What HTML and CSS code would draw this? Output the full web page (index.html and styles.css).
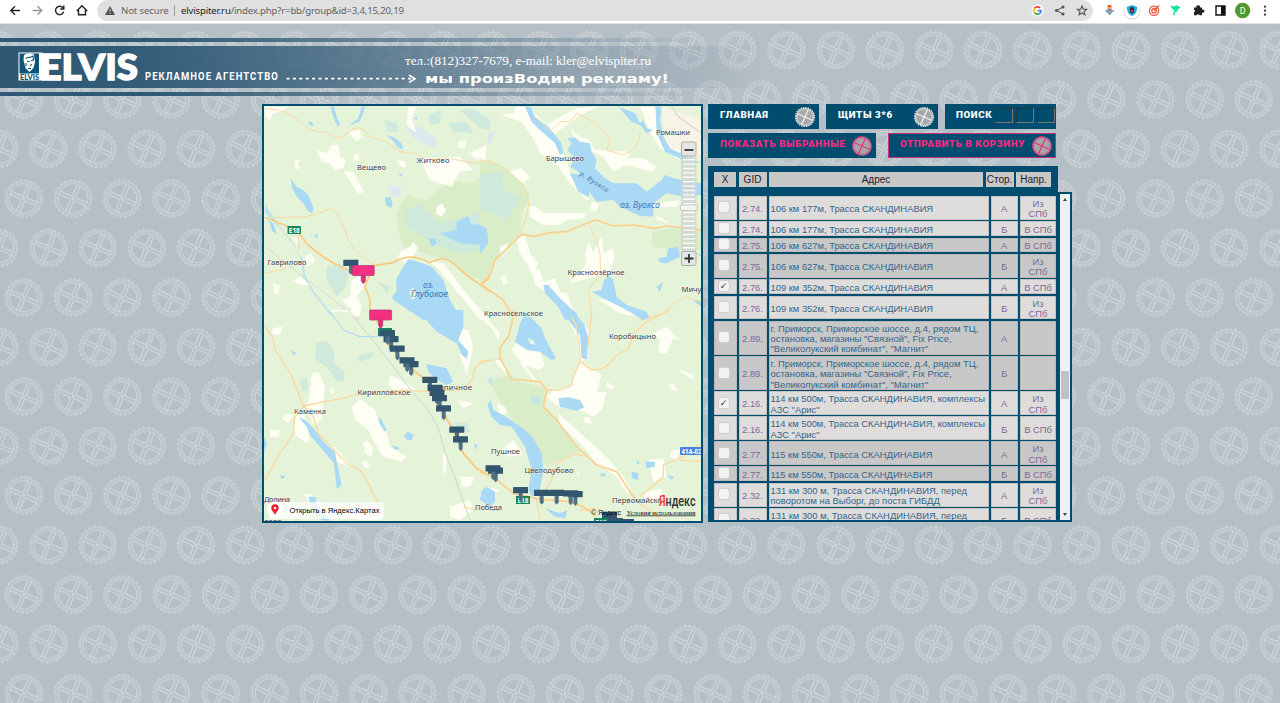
FILE: index.html
```html
<!DOCTYPE html>
<html lang="ru">
<head>
<meta charset="utf-8">
<title>ELVIS</title>
<link rel="stylesheet" href="styles.css">
</head>
<body>
<svg class="wallpaper" width="1280" height="679" viewBox="0 24 1280 679">
  <defs>
    <g id="gear" fill="none">
      <circle r="18.7" stroke-width="1" stroke-dasharray="2.7 2.195"/>
      <circle r="17.1" stroke-width="1" stroke-opacity=".75"/>
      <circle r="14.6" stroke-width="1" stroke-opacity=".9"/>
      <g transform="rotate(23)" stroke-width="1.1">
        <path d="M-14.600-1.700H-2.800L-1.700-2.800V-14.600M1.700-14.600V-2.800L2.800-1.700H14.600M14.600 1.700H2.800L1.700 2.800V14.600M-1.700 14.600V2.800L-2.800 1.700H-14.600"/>
        <circle r="1"/>
      </g>
    </g>
    <g id="wheel">
      <circle r="9.3" fill="#a6a9aa"/>
      <circle r="9.5" fill="none" stroke="currentColor" stroke-width="1.2" stroke-dasharray="1.400 1.087"/>
      <circle r="8.2" fill="none" stroke="currentColor" stroke-width=".7"/>
      <path d="M-8 0H8M0-8V8" transform="rotate(24)" stroke="currentColor" stroke-width="1.300"/>
    </g>
    <pattern id="gears" patternUnits="userSpaceOnUse" x="-.8" y="25.3" width="49.2" height="99">
      <g stroke="#d4dade">
        <use href="#gear" x="0" y="24.7"/><use href="#gear" x="49.2" y="24.7"/>
        <use href="#gear" x="24.6" y="74.2"/>
      </g>
    </pattern>
  </defs>
  <rect y="24" width="1280" height="679" fill="#b5bfc6"/>
  <rect y="24" width="1280" height="679" fill="url(#gears)"/>
</svg>

<div class="browser">
  <svg class="nav" width="97" height="22" viewBox="0 0 97 22" fill="none" stroke="#222" stroke-width="1.4">
    <path d="M20 10.5H11M15 6.3L10.8 10.5L15 14.7"/>
    <path d="M32.5 10.5H41.5M37.5 6.3L41.7 10.5L37.5 14.7" stroke="#999"/>
    <path d="M63 7.8A4.2 4.2 0 1 0 63.7 11.8M63.8 5.5V9H60.2"/>
    <path d="M76.8 11L82 5.700L87.2 11M78.5 10V14.8H85.5V10"/>
  </svg>
  <div class="omnibox">
    <svg width="10" height="9" viewBox="0 0 10 9"><path d="M5 0L10 9H0Z" fill="#505357"/><path d="M5 3.2V5.6M5 6.6V7.7" stroke="#e0e0e0"/></svg>
    <span class="insecure">Not secure</span>
    <span class="url"><b>elvispiter.ru</b>/index.php?r=bb/group&amp;id=3,4,15,20,19</span>
    <svg class="omniicons" width="64" height="21" viewBox="1029 0 64 21" fill="none">
      <circle cx="1037.5" cy="10.5" r="6" fill="#fff"/>
      <g stroke-width="1.7"><path d="M1040.2 8A3.6 3.6 0 0 0 1034.6 8.3" stroke="#ea4335"/><path d="M1034.6 8.3A3.7 3.7 0 0 0 1034.6 12.7" stroke="#fbbc05"/><path d="M1034.6 12.7A3.6 3.6 0 0 0 1039.9 13.3" stroke="#34a853"/><path d="M1037.5 10.6H1041.2A3.7 3.7 0 0 1 1039.9 13.3" stroke="#4285f4"/></g>
      <path d="M1063 7L1056.5 10.5L1063 14" stroke="#555"/><g fill="#555"><circle cx="1063" cy="7" r="1.6"/><circle cx="1056.5" cy="10.5" r="1.6"/><circle cx="1063" cy="14" r="1.6"/></g>
      <path d="M1082 5.9L1083.3 9.1L1086.7 9.3L1084.1 11.5L1084.9 14.8L1082 13L1079.1 14.8L1079.9 11.5L1077.3 9.3L1080.7 9.1Z" stroke="#555" stroke-width="1.1"/>
    </svg>
  </div>
  <svg width="187" height="24" viewBox="1093 0 187 24">
    <rect x="1107.5" y="5" width="4" height="2" fill="#f05545"/><rect x="1107.5" y="7" width="4" height="2" fill="#f7a33c"/><rect x="1107.5" y="9" width="4" height="2" fill="#8f69b4"/><path d="M1104.5 10H1114.5L1109.5 15.5Z" fill="#7fa3b4"/>
    <circle cx="1132" cy="11" r="8.6" fill="#d3d5d6"/><circle cx="1132" cy="10.5" r="8" fill="#fff"/><path d="M1126.800 7L1132 5L1137.200 7Q1137.200 13.5 1132 16Q1126.800 13.5 1126.800 7Z" fill="#29a5dd"/><rect x="1130" y="7" width="4" height="6.5" rx="2" fill="#232939"/><circle cx="1132" cy="11" r="1.2" fill="#e64c3c"/>
    <g fill="none" stroke="#ec5540"><circle cx="1154" cy="10.7" r="4.6" stroke-width="1.3"/><circle cx="1154" cy="10.7" r="2.2" stroke-width="1.3"/><path d="M1154 10.7L1159 5.5" stroke-width="1.6"/></g>
    <path d="M1171 5.5L1174 6.6L1176.5 5.3L1180.5 7L1178.8 9L1177.6 9L1178 11L1175.3 12L1174.4 15.5L1173 15.2L1174 10L1171.2 8Z" fill="#1de49a"/>
    <path d="M1194 7.4H1196.4A1.8 1.8 0 1 1 1199.9 7.4H1202V9.6A1.7 1.7 0 1 1 1202 12.7V15.300H1199.6A1.6 1.6 0 0 0 1196.6 15.300H1194V12.5A1.6 1.6 0 0 0 1194 9.6Z" fill="#222"/>
    <path d="M1216 6H1225V15H1216Z" fill="none" stroke="#111" stroke-width="1.4"/><rect x="1221" y="6" width="4" height="9" fill="#111"/>
    <circle cx="1242.6" cy="10.5" r="7.7" fill="#54992e"/><text class="avatar" x="1242.6" y="13.7" text-anchor="middle">D</text>
    <g fill="#333"><circle cx="1265" cy="6.7" r="1.1"/><circle cx="1265" cy="10.7" r="1.1"/><circle cx="1265" cy="14.7" r="1.1"/></g>
  </svg>
</div>

<header class="banner">
  <div class="stripe"></div>
  <div class="band">
    <svg class="brand" width="820" height="42" viewBox="0 46 820 42">
      <rect x="18.5" y="52.500" width="24" height="28" fill="#fff"/>
      <rect x="19.5" y="53.5" width="19.500" height="20" fill="#0c5576"/>
      <path d="M24 55Q29 52 34 54.500L35 62L33.500 68L29.500 72L25.500 68L23.500 60Z" fill="#fff"/>
      <path d="M26 59Q27 56.500 30 57.500L33 56L33.500 60L31 61M27 61.500H29.500M31.500 64L30.500 66M28 68.500H31M26 63V66" fill="none" stroke="#0c5576" stroke-width="1.100"/>
      <text class="logo-mini" x="20" y="79.700" textLength="19" lengthAdjust="spacingAndGlyphs">ELVIS</text>
      <text class="logo-main" x="39.500" y="79.800" textLength="98.500" lengthAdjust="spacingAndGlyphs">ELVIS</text>
      <text class="agency" transform="translate(145 80) scale(.8 1)" textLength="166">РЕКЛАМНОЕ АГЕНТСТВО</text>
      <path d="M286.500 78.700H411" stroke="#fff" stroke-width="1.700" stroke-dasharray="3 3.400"/>
      <path d="M409 75L415 78.700L409 82.400" fill="none" stroke="#fff" stroke-width="1.700"/>
      <text class="contact" x="405" y="64.500" textLength="246" lengthAdjust="spacingAndGlyphs">тел.:(812)327-7679, e-mail: kler@elvispiter.ru</text>
      <text class="slogan" x="425" y="82.500" textLength="244" lengthAdjust="spacingAndGlyphs">мы произВодим рекламу!</text>
    </svg>
  </div>
  <div class="stripe"></div>
</header>

<main class="content">
  <section class="map">
    <svg width="437" height="415" viewBox="264 106 437 415">
      <defs>
        <g id="sign"><path d="M5.700 5H9.700V12.500L7.700 15L5.700 12.500Z" fill="#527084"/><rect width="15" height="6.200" rx=".5" fill="#31566e"/></g>
        <g id="picked"><path d="M9 9H13.200V15.500L11.100 18.500L9 15.500Z" fill="#e52a78" stroke="#8c3b6b" stroke-width=".6"/><rect width="22" height="10" rx="1" fill="#f72f82" stroke="#a33b73" stroke-width=".7"/></g>
      </defs>
      <rect x="264" y="106" width="438" height="415" fill="#e5f3d8"/>
      <g transform="translate(260 100) scale(.33333)">
        <path d="M410 340L440 285L500 300L570 240L640 250L690 200V545L640 530L560 480L430 440L412 380Z" fill="#d9eec8"/>
        <path d="M435 330L480 315L540 370L690 330V440L610 460L540 440L440 380ZM372 60L410 70L415 95L385 95ZM505 45L545 30L540 70L510 75ZM565 70L620 65L640 100L580 95ZM600 30L640 25L690 60V90L660 85ZM665 220L690 215V350L665 330ZM200 500L240 490L270 510L255 560L230 590L200 540ZM355 545L390 560L380 580Z" fill="#cfe9dc"/>
        <path d="M435 80L480 80L530 120L525 145L470 120ZM385 255L425 265L420 290L395 290ZM500 195L525 220L515 230ZM612 205H640L625 220Z" fill="#dbe8ef"/>
        <g fill="#fffef5">
          <path d="M15 20H85L65 35L40 40L30 60L15 50ZM170 150L200 160L215 135L235 135L240 170L258 180L250 205L225 210L210 190L185 185ZM252 215L280 215L295 245L312 275L295 283ZM280 165L297 160V180L283 183ZM105 180L122 178L113 192L122 205L105 207ZM265 95L300 90L306 110L290 125ZM445 20H468L455 60L470 100L440 75ZM595 125L620 120L615 145L595 145ZM630 160L680 135L675 180L645 175ZM480 175L600 170L640 210L600 215L575 260L540 250L510 240ZM415 180L438 185L435 205L415 195ZM530 320L545 310L558 330L545 350L527 340ZM420 455L450 440L460 425L475 445L440 490L415 475ZM95 545L120 530L155 555L125 555ZM135 470L155 460L165 485L140 500ZM40 550L60 555L55 585L40 575ZM275 540L310 525L318 550L290 590L305 615L300 640L270 625L245 600L270 590ZM95 410L115 418L110 432Z"/>
          <path d="M495 480L530 500L660 660H690L610 570L550 490Z"/>
        </g>
        <g fill="#a9d9f5">
          <path d="M212 20H222L230 50L240 75L232 78L218 45ZM305 20H315L310 40L298 65L268 75L295 55ZM378 105L402 112L425 130L430 150L412 140L398 120ZM145 63L155 66L162 78L150 77ZM92 235L110 260L130 270L148 290L160 325L158 340L145 335L130 310L110 290L95 260ZM375 292L392 292L398 312L392 325L378 315ZM415 222H428L425 230ZM460 55L472 50V60ZM162 408L172 400V418ZM25 360L40 370L50 402L38 395ZM505 415L525 415L530 432L515 440ZM540 400L590 390L590 365L625 348L635 375L690 370V400L670 405L665 435L600 430L570 415Z"/>
          <path d="M445 478Q475 485 515 500L550 540L570 600L605 660H490L460 640L400 600Q390 590 410 575L408 540L430 500ZM448 575L460 560L470 590L455 600Z" fill-rule="evenodd"/>
          <path d="M15 310V340L60 385L100 435L120 470L130 530L160 580L205 640L230 660L205 630L160 570L138 530L128 480L100 430L60 380Z" opacity=".6"/>
        </g>
        <g fill="none" stroke="#fbd9a0" stroke-width="4" stroke-linejoin="round">
          <path d="M15 25Q90 30 120 65T200 97Q230 130 265 97T330 110L380 125L420 155L465 160L500 180L560 173L640 190L690 183M40 352H130Q180 340 200 330T235 345T258 400T300 465L340 493M115 405L118 450M15 520L80 505" stroke-width="3"/>
          <path d="M15 352L110 390L140 430Q180 470 250 505L320 530M340 497L400 488Q450 455 510 488Q550 465 580 490L620 525L690 575M340 495L315 560L330 600V640M690 530L665 553" stroke="#fbca7e" stroke-width="5"/>
        </g>
        <path d="M15 440L130 530L300 660" fill="none" stroke="#cbd2cd" stroke-width="2"/>
      </g>
      <g transform="translate(480 100) scale(.33333)">
        <path d="M0 180Q60 185 120 235L150 290L125 340L120 410L60 455L20 530L0 550ZM515 395L600 380L662 390V450L590 450L515 440Z" fill="#d9eec8"/>
        <path d="M0 225L60 215L75 270L125 295L80 360L0 325ZM455 185L490 190L470 200Z" fill="#cfe9dc"/>
        <path d="M25 100L45 95L30 135L22 128Z" fill="#dbe8ef"/>
        <g fill="#fffef5">
          <path d="M60 45L100 40L110 20H145L200 75L240 50L290 25L350 20L300 45L220 105L240 145L260 180L275 235L330 300L320 300L265 245L230 190L215 145L155 110L125 65ZM150 95L260 180L240 200L180 160ZM270 85L300 110L330 120L345 150L450 155L440 175L490 175L530 200L515 215L440 195L400 215L370 170L290 130ZM85 215L125 205L150 230L130 250ZM145 320L165 318L190 340L320 340L310 355L260 360L240 375L190 375L150 350ZM110 415L135 405L150 460L175 490L160 520L120 460ZM60 440L85 430L75 450L60 460ZM60 530L75 525L85 550L70 555ZM145 505L180 510L190 545L225 535L240 575L260 580L290 650L265 645L190 570L165 555L160 530ZM315 460L325 425L340 455L365 410L370 460L400 445L402 480L385 520L270 550L320 490ZM350 595L420 610L470 650L420 640ZM505 315L600 300L590 320L500 325ZM530 345L570 370L530 360ZM335 305L355 310L350 335L330 330ZM480 20H525L530 80L540 120L600 150L600 180L540 145L510 95Z"/>
          <path d="M545 20L665 60V170L560 140L550 90Z" fill="#f7f3e6"/>
        </g>
        <path d="M575 20L595 50L665 100" fill="none" stroke="#d9d9d9" stroke-width="4"/>
        <g fill="#a9d9f5">
          <path d="M135 20H152L165 50L205 80L245 130L250 160L240 165L225 130L180 90L155 65Z"/>
          <path d="M262 115L285 112L300 125L330 130L335 155L350 180L345 205L375 235L400 250L470 250L500 275L545 240L555 225L580 235L665 250V285L610 290L560 280L520 310L520 350L480 348L420 320L400 300L350 305L320 265L300 220L270 200L285 175L262 150L275 130Z"/>
          <path d="M270 220L305 225L330 270L325 292L295 275ZM415 20L440 30L465 40L480 70L490 60L500 85L520 90L500 100L480 75L455 65ZM527 20H545L540 60L550 110L570 145L665 190L610 180L555 155L530 100ZM535 475L560 470L565 445L595 440L600 470L580 480L560 490L540 488ZM190 555L205 555L245 600L290 640L297 660H255L235 620L195 580ZM335 575L365 570L370 545L385 525L400 540L410 590L440 615L500 635L508 655L490 660L440 630L380 600ZM0 375L20 385L25 430L0 460ZM640 455L665 465V470ZM635 600L665 605V620ZM530 560L550 545L540 575Z"/>
        </g>
        <g fill="none" stroke="#fbd9a0" stroke-width="5" stroke-linejoin="round">
          <path d="M165 50L210 95L240 65H270L290 40L350 70L390 120L380 150L430 165Q475 150 480 100M0 180Q60 185 100 225T145 300T120 400M325 370L350 420L360 460L362 520L325 570L335 640V660M665 605L615 590Q590 600 550 640L480 660" stroke-width="3"/>
          <path d="M0 555L30 525L45 480L125 403L160 410L210 398L260 395Q330 365 350 360L400 378L460 375L525 385L560 378L665 390M0 550L70 600L100 650" stroke="#fbd08c"/>
        </g>
      </g>
      <g transform="translate(260 310) scale(.33333)">
        <path d="M170 100L200 92L220 120L225 160L255 185L250 215L230 210L200 170L165 150ZM290 140L340 125L335 145L300 155ZM120 210L140 205L145 245L125 240ZM585 335L625 340L630 365L595 370ZM345 50L385 70L370 60Z" fill="#cfe9dc"/>
        <g fill="#fffef5">
          <path d="M210 0H300V15L285 20L260 5H220ZM40 55L68 50L60 75L35 70ZM155 190L175 185L195 230L185 330L160 345L140 290L150 250ZM210 235L225 240L215 255ZM275 290L300 265L345 300L360 345L380 370L390 410L440 440L425 455L370 440L345 400L325 360L285 330ZM310 400L322 390L340 415L335 440L315 430ZM305 455L320 450L330 470L315 475ZM100 300L130 300L150 390L140 400L105 375ZM180 400L225 410L270 465L275 475L230 455ZM30 360L60 360L55 380L30 380ZM80 310L100 315L85 340L65 325ZM390 195L440 220L470 240L420 255L385 225ZM550 430L560 440L555 500L548 470ZM600 500L645 500L630 530L605 530ZM590 270L640 280L610 295ZM570 590L630 570L640 600L600 630L570 620ZM130 555L150 550L200 600L370 590L365 630H310L200 620ZM585 50L625 60L640 110L620 195L605 150Z"/>
        </g>
        <g fill="#a9d9f5">
          <path d="M440 0H610L610 50L595 90L625 125L620 147L605 135L590 100L530 65L490 20ZM500 162L560 175L580 215L560 225L530 210L505 185ZM115 320L135 330L165 360L190 395L225 425L235 480L245 525L230 537L222 460L180 410L150 375L140 350ZM355 320L365 330L380 360L375 365L358 340ZM432 375L445 365L460 375L455 390L440 390ZM395 405L420 415L405 420ZM92 120L110 130L100 135ZM60 495L78 500L65 507ZM145 560L165 560L175 590L210 632L185 630L155 590ZM643 400L653 405L645 420ZM675 535L690 530V590L665 570ZM12 380V430L20 400Z"/>
          <path d="M205 0L230 30L250 60L300 80H360L400 60" fill="none" stroke="#a9d9f5" stroke-width="3"/>
        </g>
        <path d="M265 0L370 130L460 250Q520 310 540 370Q560 450 580 490L630 630" fill="none" stroke="#cfd5ce" stroke-width="3"/>
        <g fill="none" stroke="#fbd9a0" stroke-linejoin="round">
          <path d="M15 50L40 85L45 120L85 180L100 210L130 288L260 262Q300 245 350 245L430 240L500 245L600 240Q640 220 640 190Q650 155 690 152M130 288L105 320L100 370L60 430L15 510M130 288L160 320L175 370L270 470Q300 465 325 520L350 570L355 600M690 580L650 600L610 590" stroke-width="4"/>
          <path d="M350 30L390 110L440 165L510 220L550 310L580 360L610 430L650 475L690 498" stroke="#fbca7e" stroke-width="6"/>
        </g>
      </g>
      <g transform="translate(480 310) scale(.33333)">
        <path d="M30 210L90 195L120 215L195 235L190 290L230 340L300 425L260 440L200 470L150 400L50 260Z" fill="#d9eec8"/>
        <path d="M150 260H180V285H155ZM20 210L40 200L35 230Z" fill="#c8e6e0"/>
        <g fill="#fffef5">
          <path d="M0 0L60 70L55 90L35 55L0 20ZM45 150L60 150L80 185L70 185ZM115 90L170 100L195 165L180 180L130 165L95 120ZM120 160L130 160L170 210L160 210ZM300 150L325 170L365 195L350 245H380L365 300L340 320L300 300L235 290L200 260L220 240L270 235ZM235 310L380 440L430 500L455 545L440 550L410 500L350 460L300 400L240 345ZM380 215L405 230L395 240L378 230ZM600 178L640 195L640 208L605 190ZM565 225L580 220L595 245L575 240ZM520 70L560 50L600 90L580 85L560 130L535 130L540 90ZM310 320L330 325L335 340L315 340ZM50 280L75 290L80 310L60 320ZM65 420L100 390L130 435L80 440ZM0 555L20 530L60 540L30 560ZM290 485L300 490L295 500ZM505 450L550 445L560 500L520 515ZM575 420L600 420L590 450L570 440ZM490 550L540 535L550 560L500 575ZM260 20L330 60L320 140L300 160L290 80Z"/>
        </g>
        <g fill="#a9d9f5">
          <path d="M120 40L130 20H150L185 55L195 85L228 145L215 150L180 125L140 120L105 95L115 60ZM143 85L150 100L165 105L160 90Z" fill-rule="evenodd"/>
          <path d="M240 0H275L310 40L325 80L320 148L305 145L300 75L265 30ZM430 0H490L508 20L490 30L455 5ZM235 265L265 262L300 270L313 292L290 302L240 290ZM22 285L32 270L40 300L70 315L100 335L135 360L160 385L185 430L190 480L178 550L155 560L145 540L155 480L135 410L95 350L60 345L35 320ZM358 490L378 492L370 502ZM455 485L475 490L475 510L455 505ZM470 450L480 460L470 462ZM495 455L525 455V470L500 475ZM560 495L582 500L575 510ZM5 540L20 530L45 545V575L30 590L0 570ZM195 595L240 610L262 600L255 625L225 620Z"/>
        </g>
        <g fill="none" stroke="#fbd9a0" stroke-linejoin="round">
          <path d="M0 155L55 148M275 20L290 50L300 130V155L335 180Q385 180 405 140L445 115L460 70L500 35L570 0M300 155L280 200L275 225L240 240L200 240M190 550L215 510L230 460L285 432L310 438M480 560L550 500V465L600 445L665 400M600 450L665 455M545 630L480 580L460 560M300 600L345 595L420 620M325 110L335 0M170 570L180 630" stroke-width="4"/>
          <path d="M100 0L95 45L85 80L60 115V145L80 180L95 208L180 215L200 240L190 290L225 325L260 370L290 410L350 465L410 485L460 560L480 580M0 487L40 500L100 550L180 568L270 575L310 590L350 620" stroke="#fbd08c" stroke-width="5"/>
        </g>
      </g>
      <rect x="287.500" y="226" width="13.500" height="8" rx="1" fill="#17875b"/><text class="badge" x="288.800" y="232.600" textLength="11">E18</text>
      <rect x="378" y="328" width="14" height="8" fill="#17875b"/>
      <g class="place">
        <text x="656" y="135" textLength="34">Ромашки</text><text x="416.500" y="163" textLength="33">Житково</text><text x="357" y="170" textLength="29">Вещево</text>
        <text x="546" y="161" textLength="38">Барышево</text><text x="267.500" y="265" textLength="39">Гаврилово</text><text x="567.500" y="274.500" textLength="57">Красноозёрное</text>
        <text x="681.500" y="292">Мичу</text><text x="484" y="316" textLength="59">Красносельское</text><text x="609" y="339" textLength="47">Коробицыно</text>
        <text x="357.500" y="395" textLength="53">Кирилловское</text><text x="429" y="390" textLength="43">Кирпичное</text><text x="294" y="413.500" textLength="32">Каменка</text>
        <text x="491" y="453.500" textLength="29">Пушное</text><text x="524.500" y="473" textLength="49">Цвелодубово</text><text x="475" y="509.500" textLength="27">Победа</text>
        <text x="264" y="502" textLength="26">Долина</text><text x="612" y="503" textLength="50">Первомайско</text><text x="264" y="524">лово</text>
      </g>
      <g class="lake"><text x="423" y="287.500">оз.</text><text x="411" y="297" textLength="37" lengthAdjust="spacingAndGlyphs">Глубокое</text><text x="620" y="207.500" textLength="40" lengthAdjust="spacingAndGlyphs">оз. Вуокса</text></g>
      <text class="river" transform="translate(579 175) rotate(32)" textLength="33">р. Вуокса</text>
      <rect x="680" y="447" width="24" height="8" rx="1" fill="#4b82dc"/><text class="badge" x="681.500" y="453.700" textLength="20" lengthAdjust="spacingAndGlyphs">41A-02</text>
      <rect x="516" y="496" width="14" height="8" fill="#17875b"/><text class="badge" x="517.500" y="502.600" textLength="11">E18</text>
      <rect x="594" y="518" width="14" height="8" fill="#17875b"/><text class="badge" x="595.500" y="524.600" textLength="11">E18</text>
      <use href="#sign" x="343.300" y="259.700"/><use href="#picked" x="352.200" y="265.500"/>
      <use href="#picked" x="369.600" y="310"/>
      <use href="#sign" x="383.500" y="336"/><use href="#sign" x="380" y="330"/><use href="#sign" x="389.700" y="345.500"/>
      <use href="#sign" x="403.500" y="361"/><use href="#sign" x="399.500" y="357.300"/><use href="#sign" x="422.300" y="376.700"/>
      <use href="#sign" x="427.500" y="384.700"/><use href="#sign" x="429.500" y="389.700"/><use href="#sign" x="432" y="395"/><use href="#sign" x="436" y="405.200"/>
      <use href="#sign" x="449.300" y="426.500"/><use href="#sign" x="453" y="436.200"/><use href="#sign" x="488" y="467.500"/><use href="#sign" x="485.500" y="465.200"/>
      <use href="#sign" x="513" y="487"/><use href="#sign" x="534" y="489.700"/><use href="#sign" x="549" y="489.700"/><use href="#sign" x="567.700" y="491"/><use href="#sign" x="563" y="490.200"/>
      <use href="#sign" x="602" y="512"/><use href="#sign" x="608" y="518"/><use href="#sign" x="619" y="519"/>
      <rect x="269" y="502" width="115" height="17" rx="3" fill="#fff" opacity=".75"/>
      <circle cx="275" cy="509.500" r="8" fill="#fff"/>
      <path d="M275 515.500C274.500 512 271.300 511 271.300 508A3.700 3.700 0 0 1 278.700 508C278.700 511 275.500 512 275 515.500Z" fill="#ed1c24"/><circle cx="275" cy="508" r="1.300" fill="#fff"/>
      <text class="open" x="289.500" y="512.700" textLength="90">Открыть в Яндекс.Картах</text>
      <text class="copy" x="591" y="514.700" textLength="30">© Яндекс</text><text class="terms" x="626.500" y="514.500" textLength="69" lengthAdjust="spacingAndGlyphs">Условия использования</text>
      <text class="yandex" x="659" y="505.500" textLength="36.500" lengthAdjust="spacingAndGlyphs"><tspan fill="#f33">Я</tspan>ндекс</text>
      <g>
        <rect x="681" y="157" width="15.500" height="94" fill="#cfd5cf" opacity=".8"/>
        <path d="M689 159V251" stroke="#fff" stroke-width="12" stroke-dasharray="1.400 3" opacity=".9"/>
        <rect x="680.500" y="205" width="17" height="5.500" rx="1.500" fill="#f5f5f5" stroke="#b8bdb8" stroke-width=".7"/>
        <rect x="681.500" y="142" width="14.500" height="14" rx="1.500" fill="#e4e5e4" stroke="#aaafaa"/><path d="M684.500 150H693.500" stroke="#333" stroke-width="1.800"/>
        <rect x="681.500" y="251.500" width="14.500" height="14" rx="1.500" fill="#e4e5e4" stroke="#aaafaa"/><path d="M684.500 258.500H693.500M689 254V263" stroke="#333" stroke-width="1.800"/>
      </g>
    </svg>
  </section>

  <section class="side">
    <nav class="menu">
      <a class="item">ГЛАВНАЯ<svg width="22" height="22" viewBox="-11 -11 22 22"><use href="#wheel"/></svg></a>
      <a class="item">ЩИТЫ 3*6<svg width="22" height="22" viewBox="-11 -11 22 22"><use href="#wheel"/></svg></a>
      <div class="item find">ПОИСК<span class="boxes"><i></i><i></i><i></i></span></div>
    </nav>
    <nav class="menu actions">
      <a class="item pink">ПОКАЗАТЬ ВЫБРАННЫЕ<svg width="22" height="22" viewBox="-11 -11 22 22"><use href="#wheel"/></svg></a>
      <a class="item pink outlined">ОТПРАВИТЬ В КОРЗИНУ<svg width="22" height="22" viewBox="-11 -11 22 22"><use href="#wheel"/></svg></a>
    </nav>
    <div class="thead"><span>X</span><span>GID</span><span>Адрес</span><span>Стор.</span><span>Напр.</span></div>
    <div class="listbox">
      <div class="rows">
        <div class="row two"><span><i class="cb"></i></span><span>2.74.</span><span>106 км 177м, Трасса СКАНДИНАВИЯ</span><span>А</span><span>Из<br>СПб</span></div>
        <div class="row"><span><i class="cb"></i></span><span>2.74.</span><span>106 км 177м, Трасса СКАНДИНАВИЯ</span><span>Б</span><span>В СПб</span></div>
        <div class="row dark"><span><i class="cb"></i></span><span>2.75.</span><span>106 км 627м, Трасса СКАНДИНАВИЯ</span><span>А</span><span>В СПб</span></div>
        <div class="row two dark"><span><i class="cb"></i></span><span>2.75.</span><span>106 км 627м, Трасса СКАНДИНАВИЯ</span><span>Б</span><span>Из<br>СПб</span></div>
        <div class="row"><span><i class="cb on"></i></span><span>2.76.</span><span>109 км 352м, Трасса СКАНДИНАВИЯ</span><span>А</span><span>В СПб</span></div>
        <div class="row two"><span><i class="cb"></i></span><span>2.76.</span><span>109 км 352м, Трасса СКАНДИНАВИЯ</span><span>Б</span><span>Из<br>СПб</span></div>
        <div class="row three dark"><span><i class="cb"></i></span><span>2.89.</span><span>г. Приморск, Приморское шоссе, д.4, рядом ТЦ,<br>остановка, магазины "Связной", Fix Price,<br>"Великолукский комбинат", "Магнит"</span><span>А</span><span></span></div>
        <div class="row three dark"><span><i class="cb"></i></span><span>2.89.</span><span>г. Приморск, Приморское шоссе, д.4, рядом ТЦ,<br>остановка, магазины "Связной", Fix Price,<br>"Великолукский комбинат", "Магнит"</span><span>Б</span><span></span></div>
        <div class="row two"><span><i class="cb on"></i></span><span>2.16.</span><span>114 км 500м, Трасса СКАНДИНАВИЯ, комплексы<br>АЗС "Арис"</span><span>А</span><span>Из<br>СПб</span></div>
        <div class="row two"><span><i class="cb"></i></span><span>2.16.</span><span>114 км 500м, Трасса СКАНДИНАВИЯ, комплексы<br>АЗС "Арис"</span><span>Б</span><span>В СПб</span></div>
        <div class="row two dark"><span><i class="cb"></i></span><span>2.77.</span><span>115 км 550м, Трасса СКАНДИНАВИЯ</span><span>А</span><span>Из<br>СПб</span></div>
        <div class="row dark"><span><i class="cb"></i></span><span>2.77.</span><span>115 км 550м, Трасса СКАНДИНАВИЯ</span><span>Б</span><span>В СПб</span></div>
        <div class="row two"><span><i class="cb"></i></span><span>2.32.</span><span>131 км 300 м, Трасса СКАНДИНАВИЯ, перед<br>поворотом на Выборг, до поста ГИБДД</span><span>А</span><span>Из<br>СПб</span></div>
        <div class="row two"><span><i class="cb"></i></span><span>2.32.</span><span>131 км 300 м, Трасса СКАНДИНАВИЯ, перед<br>поворотом на Выборг, до поста ГИБДД</span><span>Б</span><span>В СПб</span></div>
      </div>
      <div class="scroll"><b class="up"></b><b class="thumb"></b><b class="down"></b></div>
    </div>
  </section>
</main>
</body>
</html>
```

FILE: styles.css
```css
* { box-sizing: border-box; }
html, body { height: 703px; overflow: hidden; }
body { margin: 0; background: #b5bfc6; font-family: "Liberation Sans", Arial, sans-serif; }
svg { display: block; flex: none; }
.wallpaper { position: absolute; left: 0; top: 24px; z-index: -1; }

.browser { display: flex; height: 24px; background: #fff; border-bottom: 1px solid #dfe2e4; }
.omnibox { display: flex; align-items: center; width: 996px; height: 21px; padding-left: 8px; border-radius: 11px; background: #e0e0e0; font: 9.6px "Noto Sans", sans-serif; color: #606367; white-space: nowrap; }
.insecure { margin-left: 6px; width: 53px; letter-spacing: -.12px; }
.url { border-left: 1px solid #999; padding-left: 6px; line-height: 11px; letter-spacing: -.18px; }
.url b { font-weight: 400; color: #1d1e20; }
.omniicons { margin-left: auto; }
.avatar { font: 9px Roboto, sans-serif; fill: #fff; }

.banner { display: flex; flex-direction: column; gap: 4px; padding-top: 14px; height: 80px; }
.stripe { height: 4px; background: linear-gradient(90deg, #31587a 0, #2f5973 12%, rgba(56,94,121,.6) 30%, rgba(80,115,138,.3) 45%, rgba(80,115,138,0) 55%); }
.band { height: 42px; background: linear-gradient(90deg, #2f5875 0, #315b77 10%, rgba(52,93,120,.85) 20%, rgba(66,103,128,.65) 34%, rgba(90,120,140,.35) 46%, rgba(100,130,150,0) 60%); }
.brand { overflow: visible; }
.logo-mini { font: 900 7.500px Lato, sans-serif; fill: #0c5576; }
.logo-main { font: 900 36.500px Lato, sans-serif; fill: #fff; stroke: #fff; stroke-width: 1.500px; }
.agency { font: 700 11.800px Roboto, sans-serif; fill: #fff; }
.contact { font: 12.500px "Liberation Serif", serif; fill: #fff; }
.slogan { font: 700 12.500px "DejaVu Sans", sans-serif; fill: #fff; }

.content { display: flex; align-items: flex-start; gap: 5px; padding-left: 262px; }
.map { width: 441px; height: 419px; border: 2px solid #004d70; overflow: hidden; }
.place { font: 7.600px "Noto Sans", sans-serif; fill: #404048; stroke: #fff; stroke-width: 1px; stroke-opacity: .5; paint-order: stroke; }
.lake { font: italic 8.500px "Noto Sans", sans-serif; fill: #3d78b8; }
.river { font: italic 7px "Noto Sans", sans-serif; fill: #4a7fae; }
.badge { font: 700 6.500px "Noto Sans", sans-serif; fill: #fff; }
.open { font: 7.600px "Liberation Sans", sans-serif; fill: #000; }
.copy { font: 7px "Liberation Sans", sans-serif; fill: #111; }
.terms { font: 7px "Liberation Serif", serif; fill: #111; text-decoration: underline; }
.yandex { font: 500 15px Roboto, sans-serif; fill: #333; }

.side { width: 364px; }
.menu { display: grid; grid-template-columns: 111px 112px 111px; gap: 7px; height: 25px; }
.actions { grid-template-columns: 168px 168px; gap: 12px; margin-top: 4px; }
.item { display: flex; align-items: center; min-width: 0; height: 25px; padding: 0 3px 4px 12px; background: #004d70; color: #fff; font: 900 9.800px Roboto, sans-serif; letter-spacing: .6px; white-space: nowrap; }
.item svg { margin: 5px 0 0 auto; color: #eee; }
.pink { color: #f72a80; }
.pink svg { color: #ee2f7b; margin-top: 4px; }
.outlined { border: 1px solid #c62f7c; padding-left: 11px; padding-right: 2px; }
.find { padding: 0 1px 4px 11px; }
.boxes { display: flex; gap: 3px; margin: 1px 0 0 auto; }
.boxes i { width: 18px; height: 15px; border: 1px solid #26333c; border-right-color: #777; border-bottom-color: #777; }

.thead { display: grid; grid-template-columns: 22px 28px 214px 28px 35px; gap: 2px; justify-content: start; column-gap: 2.500px; width: 350px; height: 26px; margin-top: 8px; padding: 6px 0 6px 6px; background: #004d70; font-size: 10px; line-height: 15px; color: #222; text-align: center; }
.thead span { background: #c8c8c8; white-space: nowrap; }
.listbox { display: flex; justify-content: space-between; height: 330px; padding: 4px 2px 2px 5.500px; background: #004d70; overflow: hidden; }
.rows { width: 344px; height: 324px; overflow: hidden; }
.row { display: grid; grid-template-columns: 23px 28px 220px 27.500px 36px; column-gap: 2px; height: 16.550px; padding-bottom: 2px; font-size: 9.380px; line-height: 10.350px; color: #80689a; text-align: center; }
.row.two { height: 25.050px; }
.row.three { height: 35.250px; }
.row span { display: flex; align-items: center; justify-content: center; background: #dfdcdc; box-shadow: inset 0 0 0 .5px #aaa; white-space: nowrap; padding-top: 3px; }
.row.dark span { background: #c8c8c8; }
.row span:nth-child(3) { justify-content: flex-start; text-align: left; padding-left: 2px; color: #32668a; }
.cb { width: 10px; height: 10px; margin-top: -4px; margin-right: 3px; border-radius: 2px; background: #f3f3f3; box-shadow: 0 0 1px 1px #d0cece; font: 700 9px/10px "DejaVu Sans", sans-serif; color: #333; }
.cb.on::before { content: "✓"; }
.scroll { width: 10px; height: 326px; margin-top: -2px; background: #f1f1f1; display: flex; flex-direction: column; align-items: center; }
.up, .down { border: 2.500px solid transparent; width: 0; height: 0; }
.up { border-bottom: 3px solid #444; border-top: 0; margin-top: 4px; }
.thumb { width: 8px; height: 28px; margin-top: 170px; background: #c1c1c1; }
.down { border-top: 3px solid #444; border-bottom: 0; margin: auto 0 4px; }
```
